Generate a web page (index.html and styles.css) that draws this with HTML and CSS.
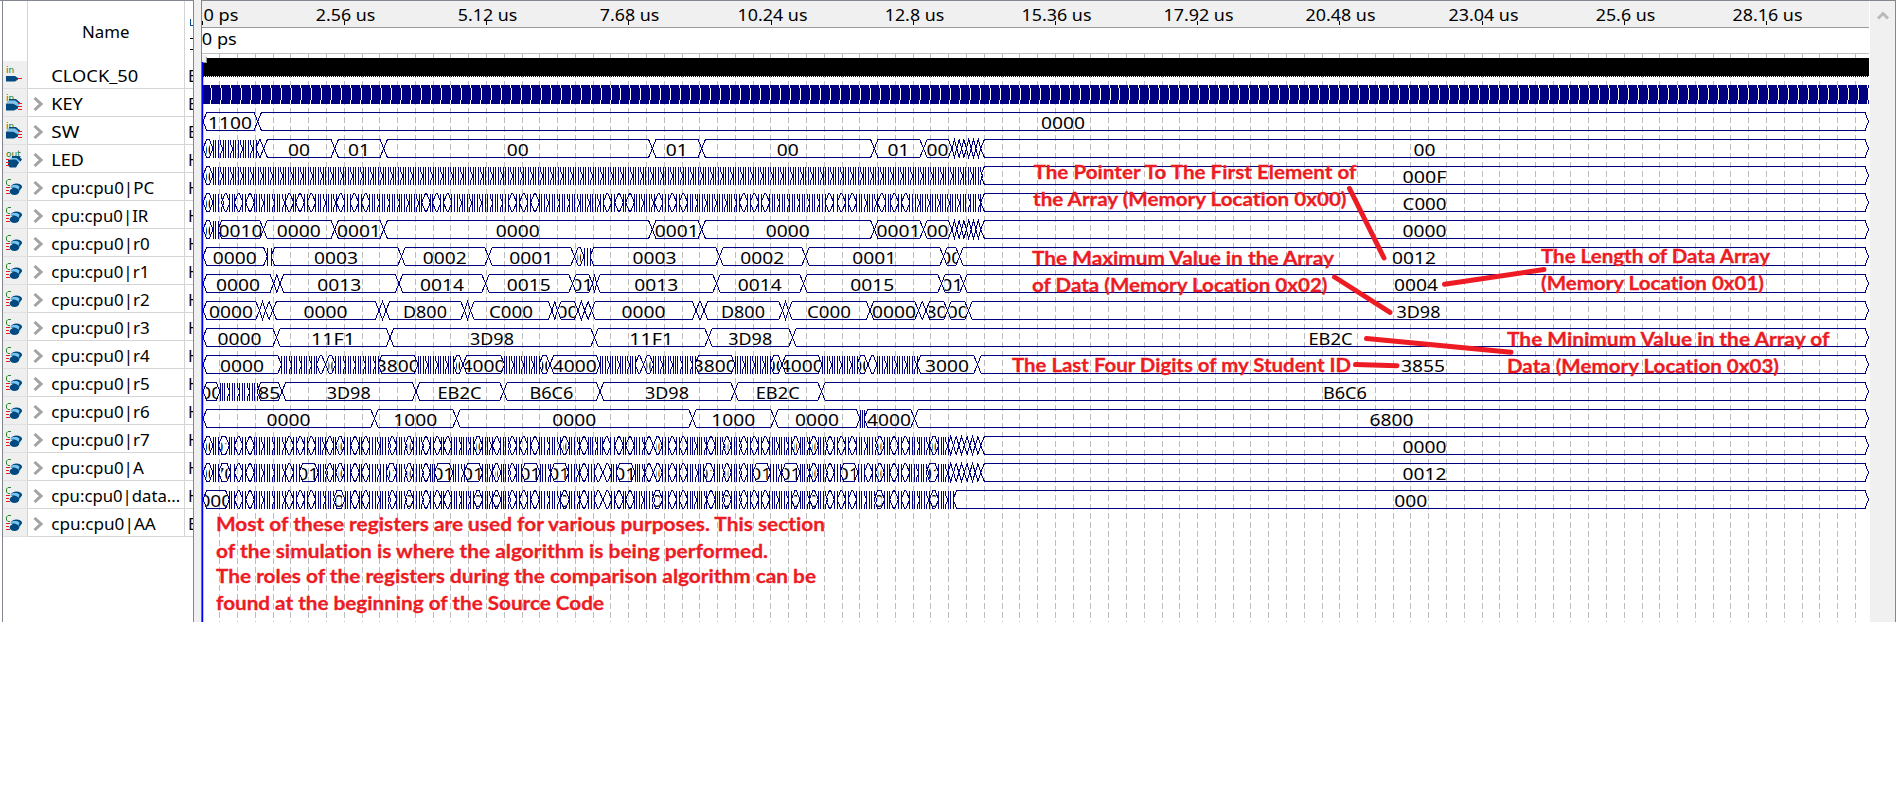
FILE: index.html
```
<!DOCTYPE html>
<html lang="en">
<head>
<meta charset="utf-8">
<title>Simulation Waveform</title>
<link rel="stylesheet" href="styles.css">
</head>
<body>
<svg class="defs" width="0" height="0">
  <symbol id="pin-in" viewBox="0 0 18 20">
    <path class="body" d="M1 11h9l3 2v1.500l-3 2H1z"/>
    <path class="wire" d="M13 13.5h4"/>
  </symbol>
  <symbol id="bus-in" viewBox="0 0 18 20">
    <path class="back" d="M2 7.500h8l4 3v3h-3L8 10H2z"/>
    <path class="body" d="M4 6h7l4 3.500v2L10 7.500H4zM1 10.500h7l5 3v2l-4 2H1z"/>
    <path class="wire" d="M13 10.500h4M13 13.500h4M13 16.500h4"/>
  </symbol>
  <symbol id="bus-out" viewBox="0 0 18 20">
    <path class="back" d="M4 8.500h9l3 3-3 3z"/>
    <path class="body" d="M7 7h7l3 3.500-1.500 2-4-3.500H7zM3 10.500h8l3 3-3 5H5l-2-2z"/>
    <path class="wire" d="M1 10.500h3M1 13.500h3M1 16.500h3"/>
  </symbol>
  <symbol id="reg" viewBox="0 0 18 20">
    <path class="arc" d="M6 2.500H3L1.500 4v3L3 8.500h2"/>
    <ellipse class="body" cx="11.500" cy="9.500" rx="5.500" ry="3"/>
    <path class="back" d="M4 10.500l4-2.500h4l4 2.500-1 4-5-4z"/>
    <ellipse class="body" cx="9.500" cy="14.500" rx="4.800" ry="3.500"/>
    <path class="body" d="M15 8.500l2 2-2.500 3-1-1z"/>
    <path class="wire" d="M1 10.500h4M1 13.500h3M1 16.500h4"/>
  </symbol>
</svg>
<main class="viewer">
  <section class="signals">
    <div class="signals-head">
      <span class="col-icon"></span>
      <span class="col-name"><svg width="50" height="24"><text class="label" x="1" y="18" textLength="47.500" lengthAdjust="spacingAndGlyphs">Name</text></svg></span>
      <span class="col-value"><i></i><b></b><b></b></span>
    </div>
    <div id="signal-list"></div>
  </section>
  <div class="splitter"></div>
  <section class="waves">
    <svg id="plot" width="1669" height="622" viewBox="201 0 1669 622"></svg>
  </section>
  <div class="scrollbar">
    <svg width="12" height="9" viewBox="0 0 12 9"><path d="M1 7.500L6 2.500L11 7.500"/></svg>
  </div>
</main>
<script src="waves.js"></script>
</body>
</html>
```

FILE: styles.css
```
body {
  margin: 0;
  background: #fff;
  color: #000;
  font-family: "Noto Sans", "Open Sans", sans-serif;
  font-size: 16.5px;
}
.defs { position: absolute; }
.viewer {
  display: flex;
  width: 1896px;
  height: 622px;
  overflow: hidden;
}
.signals {
  box-sizing: border-box;
  width: 194px;
  border-top: 1px solid #83878f;
  border-right: 1px solid #83878f;
  overflow: hidden;
  padding-left: 3px;
  background: linear-gradient(to right, #fff 2px, #83878f 2px, #83878f 3px, #fff 3px);
}
.signals-head, .signal { display: flex; }
.signals-head { height: 60px; }
.signal { height: 28px; }
.col-icon, .col-name, .col-value {
  box-sizing: border-box;
  height: 100%;
  border-right: 1px solid #d4d4d4;
  flex: none;
}
.col-icon { width: 25px; }
.col-name { width: 157px; display: flex; align-items: center; }
.signals-head .col-name { justify-content: center; padding-top: 2px; }
.col-value { width: 8px; border-right: 0; overflow: hidden; }
.signals-head .col-value { display: flex; flex-direction: column; padding: 18px 0 0 5px; }
.col-value i { width: 4px; height: 6px; border-left: 1px solid #0a4a8c; border-bottom: 1px solid #0a4a8c; }
.col-value b { width: 4px; height: 1px; background: #000; margin-top: 12px; }
.col-value b + b { margin-top: 10px; }
.signal > span { border-bottom: 1px solid #d4d4d4; }
.signal .col-icon { background: #efefef; border-bottom-color: #e0e0e0; }
.signal svg { display: block; flex: none; }
.col-icon svg { margin: 4px 0 0 2px; }
.signal .chevron { margin: 2px 7px 0 5px; }
.chevron path { fill: none; stroke: #a3a3a3; stroke-width: 3; }
.tag { font-family: "DejaVu Sans", sans-serif; font-size: 9px; fill: #1c7a1c; }
.body { fill: #004a80; }
.back { fill: #7cc4f0; }
.wire { stroke: #e81c24; stroke-width: 1; fill: none; }
.arc { stroke: #2e8a2e; stroke-width: 1; fill: none; }
.splitter { width: 7px; background: #f0f0f0; }
.waves { width: 1669px; }
.waves svg { display: block; }
.scrollbar {
  box-sizing: border-box;
  width: 26px;
  background: #f0f0f0;
  border-top: 1px solid #83878f;
  border-right: 1px solid #83878f;
  display: flex;
  justify-content: center;
  padding-top: 10px;
}
.scrollbar path { fill: none; stroke: #b9b9b9; stroke-width: 3; }
.head { fill: #f0f0f0; }
.edge { stroke: #83878f; }
.rule { stroke: #9a9a9a; }
.rule-light { stroke: #c0c0c0; }
.tick { stroke: #000; }
.grid { stroke: #bdbdbd; stroke-dasharray: 6 3; }
.clock { fill: #000; }
.clock-dots { stroke: #000; stroke-dasharray: 1 1; }
.key { fill: #000080; }
.gap { stroke: #fff; fill: none; shape-rendering: crispEdges; }
.wave { stroke: #000080; fill: none; stroke-width: 1; shape-rendering: crispEdges; }
.cursor { stroke: #0000ff; stroke-width: 1.500; }
.label { font-size: 16.500px; fill: #000; }
.note {
  font-family: Lato, "Open Sans", sans-serif;
  font-weight: 700;
  font-size: 19.500px;
  font-variant-ligatures: none;
  fill: #ed1c24;
  stroke: #ed1c24;
  stroke-width: 0.300;
}
.pointer { stroke: #ed1c24; stroke-width: 5; stroke-linecap: round; }
```

FILE: waves.js
```
const NS = 'http://www.w3.org/2000/svg';
const plot = document.getElementById('plot');

function add(parent, tag, attrs, text) {
  const el = document.createElementNS(NS, tag);
  for (const k in attrs) el.setAttribute(k, attrs[k]);
  if (text !== undefined) el.textContent = text;
  parent.appendChild(el);
  return el;
}
function line(cls, x1, y1, x2, y2) {
  add(plot, 'line', { class: cls, x1, y1, x2, y2 });
}

/* Signal list: name and drawn width */
const names = [['CLOCK_50', 87], ['KEY', 31.5], ['SW', 28], ['LED', 32.5], ['cpu:cpu0|PC', 103],
  ['cpu:cpu0|IR', 97], ['cpu:cpu0|r0', 98.5], ['cpu:cpu0|r1', 98], ['cpu:cpu0|r2', 98.5],
  ['cpu:cpu0|r3', 98.5], ['cpu:cpu0|r4', 98.5], ['cpu:cpu0|r5', 98.5], ['cpu:cpu0|r6', 98.5],
  ['cpu:cpu0|r7', 98.5], ['cpu:cpu0|A', 92.5], ['cpu:cpu0|data...', 129], ['cpu:cpu0|AA', 104.5]];
document.getElementById('signal-list').innerHTML = names.map(([name, len], i) => {
  const icon = i === 0 ? 'pin-in' : i < 3 ? 'bus-in' : i === 3 ? 'bus-out' : 'reg';
  const tag = i < 3 ? 'in' : i === 3 ? 'out' : '';
  const chevron = i ? '<path d="M1.500 1L8 7L1.500 13"/>' : '';
  const radix = i < 3 || i === 16 ? 'B' : 'H';
  return `<div class="signal"><span class="col-icon"><svg width="22" height="20">` +
    (tag ? `<text class="tag" x="1" y="8">${tag}</text>` : '') +
    `<use href="#${icon}" width="18" height="20"/></svg></span>` +
    `<span class="col-name"><svg class="chevron" width="11" height="14">${chevron}</svg>` +
    `<svg width="132" height="27"><text class="label" x="0.300" y="21" textLength="${len}" lengthAdjust="spacingAndGlyphs">${name}</text></svg></span>` +
    `<span class="col-value"><svg width="18" height="27"><text class="label" x="3" y="21">${radix}</text></svg></span></div>`;
}).join('');

/* Time ruler */
add(plot, 'rect', { class: 'head', x: 201, y: 0, width: 1668, height: 27 });
line('edge', 201, 0.5, 1870, 0.5);
line('rule', 201, 27.5, 1869, 27.5);
line('rule-light', 201, 53.5, 1869, 53.5);
const text = (x, y, len, s, cls = 'label') =>
  add(plot, 'text', { x, y, textLength: len, lengthAdjust: 'spacingAndGlyphs', class: cls }, s);
text(203.5, 21, 35, '0 ps');
text(201.8, 45, 35, '0 ps');
line('tick', 202.5, 21, 202.5, 25);
['2.56', '5.12', '7.68', '10.24', '12.8', '15.36', '17.92', '20.48', '23.04', '25.6', '28.16'].forEach((t, i) => {
  const x = Math.floor(202.2 + 142.2 * (i + 1)) + 0.5;
  const len = t.length === 5 ? 70 : 59.5;
  line('tick', x, 21, x, 25);
  text(x + 1 - len / 2, 21, len, t + ' us');
});

/* Grid */
for (let n = 1; n <= 93; n++) {
  const x = Math.floor(202.1 + 17.777 * n) + 0.5;
  if (x < 1869) line('grid', x, 54, x, 622);
}

/* Clock and key */
add(plot, 'rect', { class: 'clock', x: 203, y: 58, width: 1666, height: 18 });
line('clock-dots', 203, 76.5, 1869, 76.5);
add(plot, 'rect', { class: 'head', x: 202, y: 55, width: 5, height: 8 });
line('rule', 203, 62.5, 207, 62.5);
line('rule', 206.5, 57, 206.5, 63);
add(plot, 'rect', { class: 'key', x: 203, y: 85, width: 1666, height: 19 });
for (let k = 0; k < 167; k++) {
  const x = Math.floor(210.8 + 9.98 * k) + 0.5;
  add(plot, 'path', { class: 'gap', d: `M${x} 85V88M${x + 1} 88V100M${x} 100V104` });
}

/* Bus rows: "from-to:label"; "from~to" is a run of short states (optional /pitch) */
const tail = 1869;
function mixed(from, to, spots, wide) {
  const items = spots.map(c => [c - 4.3, c + 4.3, '']).concat(wide).sort((a, b) => a[0] - b[0]);
  const out = [];
  let x = from;
  for (const [a, b, t] of items) {
    if (a - x > 1.5) out.push(`${x}~${a}`);
    out.push(`${Math.max(a, x)}-${b}:${t}`);
    x = b;
  }
  if (to - x > 1) out.push(`${x}~${to}`);
  return out.join(' ');
}
const p1 = a => a.map(v => 190 + v / 3);
const p2 = a => a.map(v => 600 + v / 3);
const w1 = (a, b, t) => [190 + a / 3, 190 + b / 3, t];
const w2 = (a, b, t) => [600 + a / 3, 600 + b / 3, t];

const rows = [
  `203-257.700:1100 257.700-${tail}:0000`,
  `203-213:0000 213~256 256-263.700: 263.700-334.700:00 334.700-383.700:01 383.700-652.300:00 652.300-701.700:01 701.700-874.300:00 874.300-923.500:01 923.500-952:00 952~980.700/4.700 980.700-${tail}:00`,
  `203-213:0000 213~980.700 980.700-${tail}:000F`,
  `203-213:0000 ` + mixed(213, 980.7,
    p1([107, 146, 180, 298, 330, 364, 452, 493, 527, 708, 740, 773, 967, 1001, 1035])
      .concat(p2([22, 57, 90, 176, 217, 250, 431, 463, 496, 688, 724, 757, 845, 883, 917])), []) + ` 980.700-${tail}:C000`,
  `203-213:0000 213~218 218-263.500:0010 263.500-334.700:0000 334.700-383.700:0001 383.700-652.300:0000 652.300-701.700:0001 701.700-874.300:0000 874.300-923.500:0001 923.500-952:00 952~980.700/4.700 980.700-${tail}:0000`,
  `203-267.300:0000 267.300~271 271-401.500:0003 401.500-488.500:0002 488.500-574.500:0001 574.500-584:0000 584~590 590-719.500:0003 719.500-805.500:0002 805.500-943.500:0001 943.500-959.500:0000 959.500-${tail}:0012`,
  `203-273.700:0000 273.700-280: 280-399:0013 399-485.500:0014 485.500-572.500:0015 572.500-592.500:0016 592.500-596.500: 596.500-716.500:0013 716.500-803.500:0014 803.500-941.500:0015 941.500-963.500:0016 963.500-${tail}:0004`,
  `203-259.500:0000 259.500-265.500: 265.500-272.700: 272.700-379:0000 379-386: 386-464.500:D800 464.500-470.500: 470.500-552:C000 552-557.500: 557.500-578:0000 578~591.500/6.500 591.500-696:0000 696-704: 704-782.500:D800 782.500-788.500: 788.500-870:C000 870-918.500:0000 918.500-926: 926-947.500:3800 947.500-968.500:0000 968.500-${tail}:3D98`,
  `203-276.500:0000 276.500-390:11F1 390-594.500:3D98 594.500-708.500:11F1 708.500-792.500:3D98 792.500-${tail}:EB2C`,
  `203-281.500:0000 281.500~316.500 316.500-325.500: 325.500-335.500:0000 335.500~378 378-418:3800 418~453 453-463:4000 463-504.500:4000 504.500~539 539-550:4000 550-600:4000 600~635 635-643.500: 643.500-653.500:0000 653.500~695 695-735:3800 735~770 770-782:4000 782-822:4000 822~857 857-868:4000 868-877: 877~917 917-977.500:3000 977.500-${tail}:3855`,
  `203-220:0000 220~257 257-282:3855 282-416:3D98 416-503.500:EB2C 503.500-600:B6C6 600-734.500:3D98 734.500-821.500:EB2C 821.500-${tail}:B6C6`,
  `203-374.500:0000 374.500-456.500:1000 456.500-692.500:0000 692.500-774.500:1000 774.500-860:0000 860~864 864-914.500:4000 914.500-${tail}:6800`,
  `203-213:0000 ` + mixed(213, 948,
    p1([146, 180, 298, 331, 364, 419, 495, 527, 607, 708, 742, 773, 920, 967, 1001, 1035, 1182])
      .concat(p2([20, 57, 90, 147, 217, 250, 333, 431, 463, 496, 690, 724, 757, 882, 916])),
    [w1(85, 118, '0010'), w1(437, 464, '0000'), w1(644, 671, '0000'), w1(850, 878, '0000'), w1(1110, 1138, '0000'),
      w2(160, 187, '0000'), w2(368, 394, '0000'), w2(574, 600, '0000'), w2(628, 655, '0000'), w2(826, 853, '0000'), w2(988, 1016, '0000')]) +
    ` 948~980.700/5.200 980.700-${tail}:0000`,
  `203-213:0000 ` + mixed(213, 948,
    p1([146, 180, 298, 419, 495, 527, 708, 967, 1182, 1225])
      .concat(p2([22, 147, 217, 250, 431, 690, 805, 882, 916])),
    [w1(85, 122, '4700'), w1(327, 385, '0013'), w1(437, 464, '0000'), w1(588, 620, '0015'), w1(644, 671, '0000'),
      w1(733, 789, '0014'), w1(822, 878, '0015'), w1(906, 933, '0000'), w1(994, 1050, '0013'), w1(1082, 1136, '0015'),
      w2(48, 105, '0013'), w2(160, 187, '0000'), w2(310, 343, '0015'), w2(368, 394, '0000'), w2(458, 512, '0014'),
      w2(545, 600, '0015'), w2(628, 655, '0000'), w2(720, 774, '0015'), w2(826, 853, '0000'), w2(978, 1016, '0015')]) +
    ` 948~980.700/5.200 980.700-${tail}:0012`,
  mixed(203, 953,
    p1([146, 180, 298, 331, 364, 495, 527, 607, 708, 742, 773, 967, 1001, 1035, 1182, 1225])
      .concat(p2([22, 57, 90, 217, 250, 333, 431, 463, 496, 690, 724, 757, 882, 916])),
    [w1(39, 118, '000'), w1(430, 465, '000'), w1(644, 671, '000'), w1(850, 878, '000'), w1(906, 933, '000'), w1(1110, 1138, '000'),
      w2(156, 188, '000'), w2(366, 394, '000'), w2(574, 600, '000'), w2(628, 655, '000'), w2(822, 854, '000'), w2(988, 1016, '000')]) +
    ` 953-${tail}:000`
];

function cell(a, b, top) {
  const s = Math.min(3.7, (b - a) / 2), mid = top + 9, bot = top + 18;
  return `M${a} ${mid}L${a + s} ${top}H${b - s}L${b} ${mid}L${b - s} ${bot}H${a + s}L${a} ${mid}`;
}
/* States too short for a cell: one upright stroke each, every other one bowed */
function run(a, b, top) {
  const n = Math.max(1, Math.round((b - a) / 2.5));
  let d = '';
  for (let i = 0; i <= n; i++) {
    const x = Math.floor(a + (b - a) * i / n) + 0.5;
    d += i % 4 === 3
      ? `M${x} ${top}v5L${x + 2} ${top + 8}v3L${x} ${top + 14}v4.500`
      : `M${x} ${top}v18.500`;
  }
  return d;
}
rows.forEach((row, r) => {
  const top = 112.5 + 27 * r;
  let d = '';
  row.split(' ').forEach(tok => {
    if (tok.includes('~')) {
      const [range, pitch] = tok.split('/');
      const [a, b] = range.split('~').map(Number);
      if (!pitch) {
        d += run(a, b, top);
        return;
      }
      const n = Math.max(1, Math.round((b - a) / pitch));
      const w = (b - a) / n;
      for (let i = 0; i < n; i++) d += cell(a + i * w, a + (i + 1) * w, top);
      return;
    }
    const [range, label] = tok.split(':');
    const [a, b] = range.split('-').map(Number);
    d += b === tail
      ? `M${a} ${top + 9}L${a + 3.7} ${top}H${b - 4}L${b - 0.5} ${top + 9}L${b - 4} ${top + 18}H${a + 3.7}L${a} ${top + 9}`
      : cell(a, b, top);
    if (!label) return;
    const inset = b - a < 25 ? 3 : 2;
    const clip = add(plot, 'svg', { x: a + inset, y: top - 2, width: b - a - 2 * inset, height: 24 });
    const len = label.length * 11;
    add(clip, 'text', { class: 'label', x: (b - a) / 2 - inset - len / 2 - 0.3, y: 18.5, textLength: len, lengthAdjust: 'spacingAndGlyphs' }, label);
  });
  add(plot, 'path', { class: 'wave', d });
});

line('edge', 201.5, 0, 201.5, 622);
line('cursor', 202.500, 62, 202.500, 622);

/* Notes */
[
  [1033.5, 179, 323, 'The Pointer To The First Element of'],
  [1033, 206, 313.5, 'the Array (Memory Location 0x00)'],
  [1032, 265, 302, 'The Maximum Value in the Array'],
  [1032, 292, 295.5, 'of Data (Memory Location 0x02)'],
  [1012, 372, 339, 'The Last Four Digits of my Student ID'],
  [1541, 263, 229, 'The Length of Data Array'],
  [1541, 290, 223, '(Memory Location 0x01)'],
  [1507, 346, 322.5, 'The Minimum Value in the Array of'],
  [1507, 373, 272, 'Data (Memory Location 0x03)'],
  [216, 531, 609, 'Most of these registers are used for various purposes. This section'],
  [216, 558, 552, 'of the simulation is where the algorithm is being performed.'],
  [216, 583, 600, 'The roles of the registers during the comparison algorithm can be'],
  [216, 610, 388, 'found at the beginning of the Source Code']
].forEach(([x, y, len, s]) => text(x, y, len, s, 'note'));
line('pointer', 1349.5, 188.5, 1384, 258);
line('pointer', 1334.5, 277, 1390, 312.3);
line('pointer', 1444.5, 284.3, 1544, 269.5);
line('pointer', 1366.5, 338.5, 1511, 352.3);
line('pointer', 1355.5, 364.5, 1397, 365.7);
```
